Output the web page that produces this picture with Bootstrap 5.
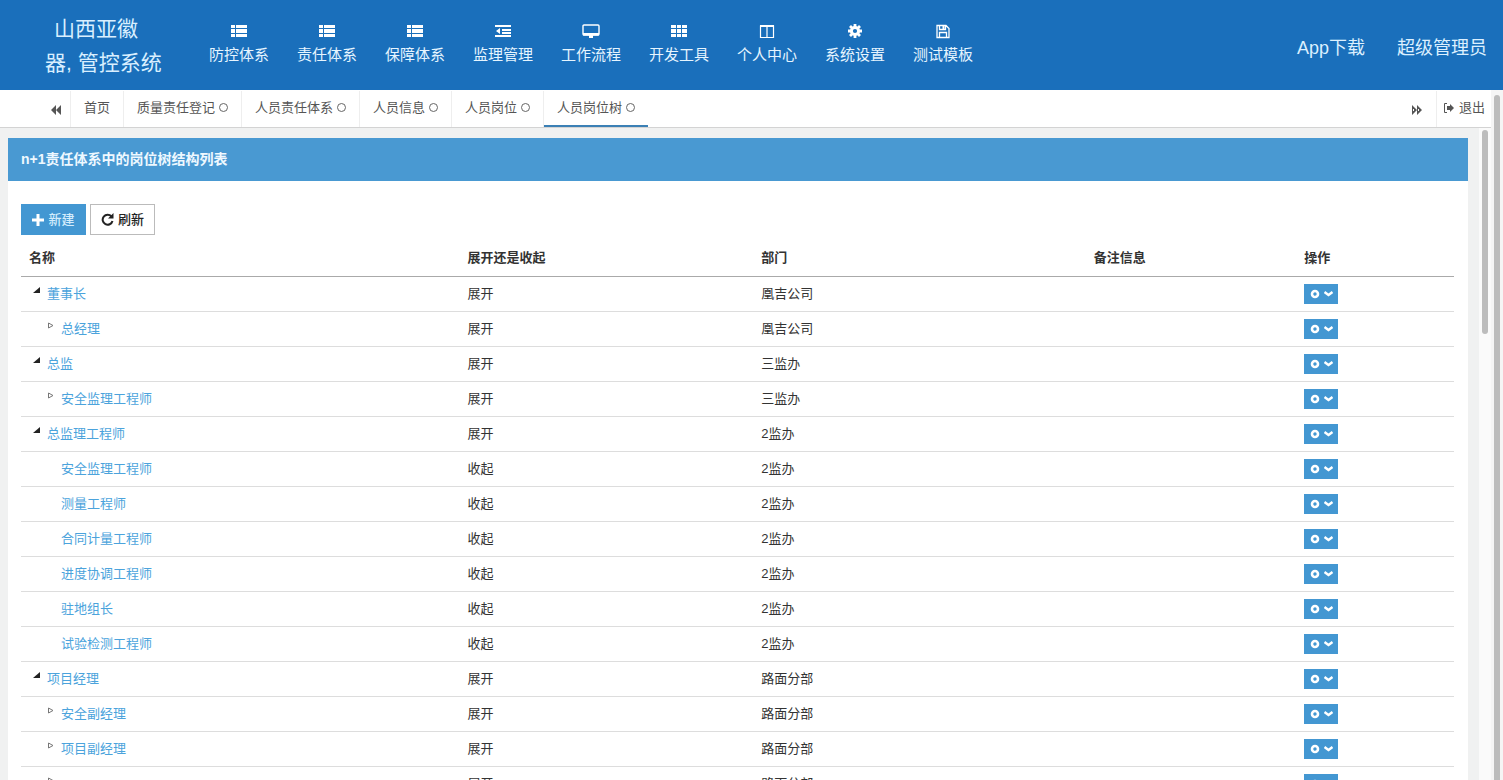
<!DOCTYPE html>
<html lang="zh-CN">
<head>
<meta charset="utf-8">
<meta name="viewport" content="width=device-width, initial-scale=1">
<title>管控系统</title>
<link href="https://cdn.jsdelivr.net/npm/bootstrap@5.3.0/dist/css/bootstrap.min.css" rel="stylesheet">
<style>
body{font-family:"Liberation Sans","Noto Sans CJK SC",sans-serif;font-size:13px;line-height:20px;color:#333;background:#fff}
a{text-decoration:none}
.topbar{background:#1a6fbb;height:90px}
.brand{width:195px;font-size:21px;line-height:34px;color:#d9efff;padding-left:45px}
.brand span{display:block}
.brand span:first-child{padding-left:9px}
.topbar .nav-link{width:88px;padding:22px 0 0;font-size:15px;line-height:22px;color:#e6f5ff;text-align:center}
.topbar .nav-link svg{display:block;margin:0 auto 4px;width:18px;height:18px;color:#fff}
.account{font-size:18px;line-height:24px;padding-top:6px}
.account a{color:#dcf0ff}
.tabstrip{height:38px;border-bottom:1px solid #d3d3d3;padding-top:1px}
.tabstrip a{color:#555;border-right:1px solid #eee;padding:7px 13px 0;height:36px;white-space:nowrap}
.tabstrip .active{border-right:0;border-bottom:2px solid #3b80b5}
.tabstrip .arrowtab{padding-top:9px}
.tabstrip .firsttab{padding-left:50px;padding-right:8px}
.tabstrip .exittab{border-right:0;padding-left:6px;padding-right:6px}
.tabstrip svg{vertical-align:-2px}
.ring{display:inline-block;width:9px;height:9px;border:1px solid #666;border-radius:50%;margin-left:4px}
.workspace{background:#f0f1f1;min-height:0}
.panelbox{background:#fff;margin:10px 11px 0 8px}
.panelhead{background:#4999d2;color:#eef8ff;font-size:14px;font-weight:600;line-height:43px;padding:0 13px;margin:0;height:43px}
.panelbody{padding:23px 14px 0 13px}
.toolrow{margin-bottom:6px}
.gutter{width:12px;background:#fafafa}
.gutter div{width:6px;background:#bcbcbc;border-radius:3px;margin:2px auto 0}
.thumb-inner{height:204px}
.gutter.outer{background:#f5f5f5}
.gutter.outer div{margin-top:5px}
.btn-tool{height:31px;width:65px;padding:0;font-size:13px;font-weight:500;border-radius:0;display:inline-flex;align-items:center;justify-content:center;gap:4px}
.btn-add{background:#4397d2;color:#d3ecfc}
.btn-again{background:#fff;border:1px solid #bbb;color:#222}
.tree{table-layout:fixed;margin:0;color:#333}
.tree th,.tree td{height:35px;padding:0 8px;border-bottom:1px solid #ddd;vertical-align:middle;white-space:nowrap}
.tree th{border-bottom-color:#aaa;font-weight:600;color:#333}
.tree a{color:#4ba3dc}
.twig{display:inline-block;width:18px;vertical-align:top;line-height:0;padding-left:4px}
.level2{padding-left:14px}
.twig svg{width:7px;height:7px;margin-top:3px}
.btn-act{background:#4397d2;border:0;border-radius:0;width:34px;height:20px;padding:0;display:flex;align-items:center;justify-content:center;gap:4px;color:#fff}
.btn-act:hover,.btn-add:hover{background:#337fb6;color:#fff}
</style>
</head>
<body class="vh-100 d-flex flex-column overflow-hidden">
<svg class="d-none">
<symbol id="list" viewBox="0 0 18 18"><path fill="currentColor" d="M1 3h4v3H1zM6 3h11v3H6zM1 7h4v4H1zM6 7h11v4H6zM1 12h4v3H1zM6 12h11v3H6z"/></symbol>
<symbol id="indent" viewBox="0 0 18 18"><path fill="currentColor" d="M1 3h16v2H1zM8 7h9v2H8zM8 10h9v2H8zM1 13h16v2H1zM6 6v6L2 9z"/></symbol>
<symbol id="screen" viewBox="0 0 18 18"><rect x="1" y="3" width="16" height="10" rx="1" fill="none" stroke="currentColor" stroke-width="1.4"/><path fill="currentColor" d="M1 11h16v2.500H1zM7 13h4v3H7z"/></symbol>
<symbol id="cells" viewBox="0 0 18 18"><path fill="currentColor" d="M1 3h5v3H1zM7 3h4v3H7zM12 3h5v3h-5zM1 7h5v4H1zM7 7h4v4H7zM12 7h5v4h-5zM1 12h5v3H1zM7 12h4v3H7zM12 12h5v3h-5z"/></symbol>
<symbol id="columns" viewBox="0 0 18 18"><path fill="none" stroke="currentColor" stroke-width="1.2" d="M2.500 4h13v11.500h-13zM9 4v11.500"/><path fill="currentColor" d="M2 3h14v2H2z"/></symbol>
<symbol id="gear" viewBox="0 0 18 18"><circle cx="9" cy="9" r="3.600" fill="none" stroke="currentColor" stroke-width="3"/><path stroke="currentColor" stroke-width="2.800" d="M9 2v3M9 13v3M2 9h3M13 9h3M4 4l2 2M12 12l2 2M14 4l-2 2M4 14l2-2"/></symbol>
<symbol id="disk" viewBox="0 0 18 18"><path fill="none" stroke="currentColor" stroke-width="1.300" d="M3 3.500h9l3 3v9H3zM5.500 15.500v-5h7v5M5.500 3.500v4h6v-4"/><path fill="currentColor" d="M8.500 4h2v3h-2z"/></symbol>
<symbol id="ff" viewBox="0 0 12 12"><path fill="currentColor" d="M1 1l5 5-5 5zM6 1l5 5-5 5z"/><path stroke="#fff" stroke-width="1" d="M2.500 5v2M7.500 5v2"/></symbol>
<symbol id="opened" viewBox="0 0 7 7"><path fill="#222" d="M7 0v6H0z"/></symbol>
<symbol id="closed" viewBox="0 0 7 7"><path fill="none" stroke="#777" d="M1.500 1L6 3.500 1.500 6z"/></symbol>
</svg>

<header class="topbar d-flex flex-shrink-0">
  <div class="brand pt-1 mt-2 flex-shrink-0"><span>山西亚徽</span><span>器, 管控系统</span></div>
  <nav class="d-flex flex-grow-1">
    <a class="nav-link" href="#"><svg><use href="#list"/></svg>防控体系</a>
    <a class="nav-link" href="#"><svg><use href="#list"/></svg>责任体系</a>
    <a class="nav-link" href="#"><svg><use href="#list"/></svg>保障体系</a>
    <a class="nav-link" href="#"><svg><use href="#indent"/></svg>监理管理</a>
    <a class="nav-link" href="#"><svg><use href="#screen"/></svg>工作流程</a>
    <a class="nav-link" href="#"><svg><use href="#cells"/></svg>开发工具</a>
    <a class="nav-link" href="#"><svg><use href="#columns"/></svg>个人中心</a>
    <a class="nav-link" href="#"><svg><use href="#gear"/></svg>系统设置</a>
    <a class="nav-link" href="#"><svg><use href="#disk"/></svg>测试模板</a>
  </nav>
  <div class="account d-flex align-items-center gap-3 pe-3"><a href="#" class="me-3">App下载</a><a href="#">超级管理员</a></div>
</header>

<div class="d-flex flex-grow-1 overflow-hidden">
  <div class="d-flex flex-column flex-grow-1 overflow-hidden">
    <nav class="tabstrip d-flex flex-shrink-0">
      <a class="arrowtab firsttab" href="#" aria-label="向左"><svg width="12" height="12" viewBox="0 0 12 12"><path fill="currentColor" d="M6 1v10L1 6zM11 1v10L6 6z"/></svg></a>
      <a href="#">首页</a>
      <a href="#">质量责任登记<span class="ring"></span></a>
      <a href="#">人员责任体系<span class="ring"></span></a>
      <a href="#">人员信息<span class="ring"></span></a>
      <a href="#">人员岗位<span class="ring"></span></a>
      <a class="active" href="#">人员岗位树<span class="ring"></span></a>
      <a class="arrowtab ms-auto" href="#" aria-label="向右"><svg width="12" height="12"><use href="#ff"/></svg></a>
      <a class="exittab" href="#"><svg width="12" height="12" viewBox="0 0 12 12"><path fill="none" stroke="currentColor" d="M4 1.500H1.500v9H4"/><path fill="currentColor" d="M4 4h3V2l4 4-4 4V8H4z"/></svg> 退出</a>
    </nav>
    <div class="workspace d-flex flex-grow-1">
      <main class="panelbox flex-grow-1">
        <h1 class="panelhead">n+1责任体系中的岗位树结构列表</h1>
        <div class="panelbody">
          <div class="toolrow d-flex gap-1">
            <button class="btn btn-tool btn-add" type="button"><svg width="12" height="12" viewBox="0 0 12 12"><path stroke="#fff" stroke-width="3" d="M6 0v12M0 6h12"/></svg>新建</button>
            <button class="btn btn-tool btn-again" type="button"><svg width="13" height="13" viewBox="0 0 13 13"><path fill="none" stroke="currentColor" stroke-width="2" d="M10.500 3.500A5 5 0 1 0 11.500 8"/><path fill="currentColor" d="M12.500 0v5.500H7z"/></svg>刷新</button>
          </div>
          <table class="tree w-100">
            <colgroup><col style="width:30.6%"><col style="width:20.5%"><col style="width:23.2%"><col style="width:14.7%"><col></colgroup>
            <thead><tr><th>名称</th><th>展开还是收起</th><th>部门</th><th>备注信息</th><th>操作</th></tr></thead>
            <tbody id="rows"></tbody>
          </table>
        </div>
      </main>
      <div class="gutter flex-shrink-0"><div class="thumb-inner"></div></div>
    </div>
  </div>
  <div class="gutter outer flex-shrink-0"><div class="h-100"></div></div>
</div>
<script src="https://cdn.jsdelivr.net/npm/bootstrap@5.3.0/dist/js/bootstrap.bundle.min.js"></script>
<script>
// [level, marker, name, state, department]
const posts = [
  [1,'opened','董事长','展开','凰吉公司'],
  [2,'closed','总经理','展开','凰吉公司'],
  [1,'opened','总监','展开','三监办'],
  [2,'closed','安全监理工程师','展开','三监办'],
  [1,'opened','总监理工程师','展开','2监办'],
  [2,'','安全监理工程师','收起','2监办'],
  [2,'','测量工程师','收起','2监办'],
  [2,'','合同计量工程师','收起','2监办'],
  [2,'','进度协调工程师','收起','2监办'],
  [2,'','驻地组长','收起','2监办'],
  [2,'','试验检测工程师','收起','2监办'],
  [1,'opened','项目经理','展开','路面分部'],
  [2,'closed','安全副经理','展开','路面分部'],
  [2,'closed','项目副经理','展开','路面分部'],
  [2,'closed','','展开','路面分部']
];
document.getElementById('rows').innerHTML = posts.map(([level, mark, name, state, dept]) => `
<tr><td><span class="level${level}"><span class="twig">${mark ? `<svg><use href="#${mark}"/></svg>` : ''}</span>${name ? `<a href="#">${name}</a>` : '&nbsp;'}</span></td>
<td>${state}</td><td>${dept}</td><td></td>
<td><button type="button" class="btn-act" aria-label="操作"><svg width="10" height="10" viewBox="0 0 10 10"><circle cx="5" cy="5" r="3" fill="none" stroke="currentColor" stroke-width="2.600"/></svg><svg width="9" height="9" viewBox="0 0 9 9"><path fill="none" stroke="currentColor" stroke-width="2.400" d="M0.500 3l4 3 4-3"/></svg></button></td></tr>`).join('');
</script>
</body>
</html>
